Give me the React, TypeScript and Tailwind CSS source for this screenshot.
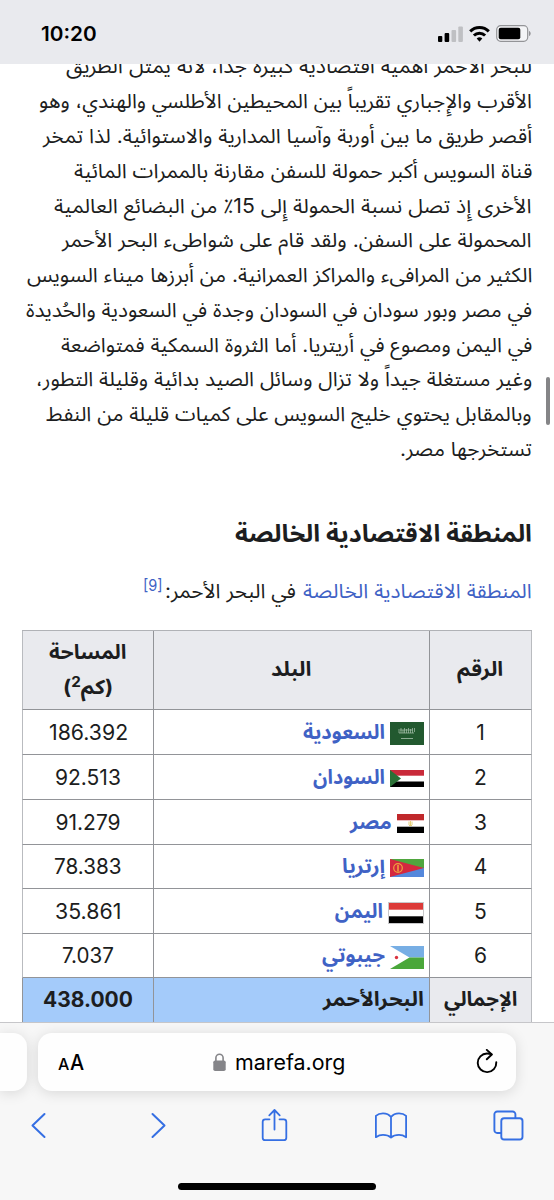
import React, { useLayoutEffect, useRef, useState } from 'react';

interface FitTextProps {
    width: number;
    className?: string;
    dir?: 'rtl' | 'ltr';
    children: React.ReactNode;
}

// Squeezes or stretches one line of text to the given width
const FitText: React.FC<FitTextProps> = ({ width, className = '', dir = 'rtl', children }) => {
    const ref = useRef<HTMLSpanElement>(null);
    const [scale, setScale] = useState(1);

    useLayoutEffect(() => {
        if (ref.current && ref.current.offsetWidth > 0) {
            setScale(width / ref.current.offsetWidth);
        }
    }, [width]);

    return (
        <span dir={dir} className={`inline-flex whitespace-nowrap ${className}`} style={{ width }}>
            <span
                ref={ref}
                className={`inline-block shrink-0 ${dir === 'rtl' ? 'origin-right' : 'origin-left'}`}
                style={{ transform: `scaleX(${scale})` }}
            >
                {children}
            </span>
        </span>
    );
};

const LINES = [
    { text: 'للبحر الأحمر أهمية اقتصادية كبيرة جداً، لأنه يمثل الطريق', width: 466 },
    { text: 'الأقرب والإِجباري تقريباً بين المحيطين الأطلسي والهندي، وهو', width: 493 },
    { text: 'أقصر طريق ما بين أوربة وآسيا المدارية والاستوائية. لذا تمخر', width: 489 },
    { text: 'قناة السويس أكبر حمولة للسفن مقارنة بالممرات المائية', width: 459 },
    { text: 'الأخرى إِذ تصل نسبة الحمولة إِلى 15٪ من البضائع العالمية', width: 478 },
    { text: 'المحمولة على السفن. ولقد قام على شواطىء البحر الأحمر', width: 470 },
    { text: 'الكثير من المرافىء والمراكز العمرانية. من أبرزها ميناء السويس', width: 505 },
    { text: 'في مصر وبور سودان في السودان وجدة في السعودية والحُديدة', width: 506 },
    { text: 'في اليمن ومصوع في أريتريا. أما الثروة السمكية فمتواضعة', width: 471 },
    { text: 'وغير مستغلة جيداً ولا تزال وسائل الصيد بدائية وقليلة التطور،', width: 496 },
    { text: 'وبالمقابل يحتوي خليج السويس على كميات قليلة من النفط', width: 486 },
    { text: 'تستخرجها مصر.', width: 132 },
];

const SaudiFlag = () => (
    <svg width="34" height="23" viewBox="0 0 34 23">
        <rect width="34" height="23" fill="#22592f" />
        <path d="M9 7v4M11 6v5M13 8v3M14.500 6v5M16.500 7v4M18.500 6v5M20.500 7v4M22.500 6v5M24.500 6v4M9 11h15M10 8h13" stroke="#a9c2ae" strokeWidth=".7" fill="none" />
        <path d="M11 16.500h12" stroke="#a9c2ae" strokeWidth=".8" />
    </svg>
);

const SudanFlag = () => (
    <svg width="34" height="17" viewBox="0 0 34 17">
        <rect width="34" height="17" fill="#fff" />
        <rect width="34" height="5.700" fill="#c92a3a" />
        <rect y="11.500" width="34" height="5.500" fill="#000" />
        <path d="M0 0l11 8.500L0 17z" fill="#2b7036" />
    </svg>
);

const EgyptFlag = () => (
    <svg width="27" height="19" viewBox="0 0 27 19">
        <rect width="27" height="19" fill="#fff" />
        <rect width="27" height="6.300" fill="#c0282b" />
        <rect y="12.700" width="27" height="6.300" fill="#000" />
        <path d="M12 7.500v3.500M15 7.500v3.500M13.500 7v5M12 11.500h3" stroke="#e6cf78" strokeWidth="1" />
    </svg>
);

const EritreaFlag = () => (
    <svg width="34" height="18" viewBox="0 0 34 18">
        <rect width="34" height="9" fill="#4fa63e" />
        <rect y="9" width="34" height="9" fill="#5488dc" />
        <path d="M0 0l34 9L0 18z" fill="#d4283f" />
        <circle cx="8" cy="9" r="4.300" fill="none" stroke="#efa13f" strokeWidth="1.200" />
        <path d="M8 6v6.500" stroke="#efa13f" strokeWidth="1.600" />
    </svg>
);

const YemenFlag = () => (
    <svg width="36" height="22" viewBox="0 0 36 22">
        <rect width="36" height="22" fill="#c8c8ca" />
        <rect x="1" y="1" width="34" height="20" fill="#fff" />
        <rect x="1" y="1" width="34" height="6.700" fill="#dc3a38" />
        <rect x="1" y="14.300" width="34" height="6.700" fill="#000" />
    </svg>
);

const DjiboutiFlag = () => (
    <svg width="34" height="23" viewBox="0 0 34 23">
        <rect width="34" height="11.500" fill="#77aee4" />
        <rect y="11.500" width="34" height="11.500" fill="#4aa73a" />
        <path d="M0 0l19.500 11.500L0 23z" fill="#fff" />
        <circle cx="6.500" cy="11.500" r="1.700" fill="#d93340" />
    </svg>
);

const ROWS = [
    { name: 'السعودية', nameWidth: 82, area: '186.392', areaWidth: 79, Flag: SaudiFlag },
    { name: 'السودان', nameWidth: 72, area: '92.513', areaWidth: 66, Flag: SudanFlag },
    { name: 'مصر', nameWidth: 42, area: '91.279', areaWidth: 65, Flag: EgyptFlag },
    { name: 'إرتريا', nameWidth: 43, area: '78.383', areaWidth: 68, Flag: EritreaFlag },
    { name: 'اليمن', nameWidth: 48, area: '35.861', areaWidth: 66, Flag: YemenFlag },
    { name: 'جيبوتي', nameWidth: 63, area: '7.037', areaWidth: 52, Flag: DjiboutiFlag },
];

const CELL = 'flex items-center justify-center border-b border-l border-b-[#929498] border-l-[#929498]';
const FIRST = 'border-r border-r-[#b9bbbf]';

const StatusBar = () => (
    <header dir="ltr" className="relative z-10 flex h-16 shrink-0 items-start justify-between bg-[#e9eaee] pl-[41px] pr-[23px]">
        <div className="pt-[21px] text-[20px] font-semibold leading-[26px] text-black">
            <FitText width={56} dir="ltr">10:20</FitText>
        </div>
        <div className="flex items-center gap-1.5 pt-[25px]">
            <svg width="25" height="16" viewBox="0 0 25 16">
                <rect y="10" width="4.300" height="6" rx="1" fill="#000" />
                <rect x="6.600" y="7" width="4.600" height="9" rx="1" fill="#000" />
                <rect x="13.500" y="4" width="4.600" height="12" rx="1" fill="#bfc0c3" />
                <rect x="20.300" y="0.500" width="4.600" height="15.500" rx="1" fill="#bfc0c3" />
            </svg>
            <svg width="21" height="16" viewBox="0 0 21 16" fill="none" stroke="#000" strokeWidth="3">
                <path d="M1.200 5.400a13.200 13.200 0 0 1 18.600 0" />
                <path d="M4.900 9.500a7.900 7.900 0 0 1 11.200 0" />
                <path d="M10.500 15.800l-2.800-3.200a4 4 0 0 1 5.600 0z" fill="#000" stroke="none" />
            </svg>
            <svg width="35" height="17" viewBox="0 0 35 17">
                <rect x="0.700" y="0.700" width="31" height="15.600" rx="4" fill="#f4f5f7" stroke="#939497" strokeWidth="1.200" />
                <rect x="2.700" y="2.700" width="21.600" height="11.600" rx="2" fill="#000" />
                <path d="M33 6v5c1-.3 1.700-1.300 1.700-2.500S34 6.300 33 6z" fill="#939497" />
            </svg>
        </div>
    </header>
);

const EconomicZoneTable = () => (
    <div className="mr-[22px] grid w-[510px] grid-cols-[103px_276px_131px] grid-rows-[79px_45px_45px_45px_44px_45px_44px_45px] border-t border-[#b0b2b6] text-[20px] leading-[35px]">
        <div className={`${CELL} ${FIRST} bg-[#e9eaee] font-bold`}>
            <FitText width={46}>الرقم</FitText>
        </div>
        <div className={`${CELL} bg-[#e9eaee] font-bold`}>
            <FitText width={40}>البلد</FitText>
        </div>
        <div className={`${CELL} flex-col border-l-[#b9bbbf] bg-[#e9eaee] font-bold`}>
            <FitText width={77}>المساحة</FitText>
            <FitText width={50}>(كم<sup className="text-[14px]">2</sup>)</FitText>
        </div>
        {ROWS.map(({ name, nameWidth, area, areaWidth, Flag }, i) => (
            <React.Fragment key={name}>
                <div className={`${CELL} ${FIRST} pt-px text-[21px]`}>{i + 1}</div>
                <div className={`${CELL} !justify-start gap-[5px] pr-[5px] pt-px`}>
                    <span className="pt-[3px]">
                        <Flag />
                    </span>
                    <a className="font-bold text-[#3f62c5]">
                        <FitText width={nameWidth}>{name}</FitText>
                    </a>
                </div>
                <div className={`${CELL} border-l-[#b9bbbf] pt-px text-[21px]`}>
                    <FitText width={areaWidth} dir="ltr">{area}</FitText>
                </div>
            </React.Fragment>
        ))}
        <div className={`${CELL} ${FIRST} bg-[#e9eaee] font-bold`}>
            <FitText width={73}>الإجمالي</FitText>
        </div>
        <div className={`${CELL} !justify-start bg-[#a4cbfa] pr-[5px] font-bold`}>
            <FitText width={101}>البحرالأحمر</FitText>
        </div>
        <div className={`${CELL} bg-[#a4cbfa] text-[21px] font-bold`}>
            <FitText width={90} dir="ltr">438.000</FitText>
        </div>
    </div>
);

const BrowserBar = () => (
    <footer dir="ltr" className="relative z-10 flex h-[178px] shrink-0 flex-col border-t border-[#c6c6c9] bg-[#f7f7f7]">
        <div className="flex h-[83px] items-start gap-[11px] overflow-hidden pt-[10px]">
            <div className="h-[58px] w-[27px] rounded-r-[14px] bg-[#fefefe] shadow-[0_2px_14px_rgba(0,0,0,0.13)]" />
            <div className="flex h-[58px] w-[478px] items-center rounded-[14px] bg-[#fefefe] pl-[20px] pr-[17px] shadow-[0_2px_14px_rgba(0,0,0,0.13)]">
                <div className="flex items-baseline gap-px pt-px font-medium text-black">
                    <FitText width={11} dir="ltr" className="text-[16px]">A</FitText>
                    <FitText width={14.500} dir="ltr" className="text-[22px]">A</FitText>
                </div>
                <div className="ml-[128px] flex items-center gap-[9px]">
                    <svg width="13" height="18" viewBox="0 0 13 18">
                        <path d="M2.900 8V4.800a3.600 3.600 0 0 1 7.200 0V8" fill="none" stroke="#858589" strokeWidth="1.600" />
                        <rect x="0.300" y="7.500" width="12.400" height="10.500" rx="1.800" fill="#858589" />
                    </svg>
                    <FitText width={110} dir="ltr" className="pt-px text-[21px] text-black">marefa.org</FitText>
                </div>
                <svg width="24" height="26" viewBox="0 0 24 26" fill="none" stroke="#000" strokeWidth="1.900" strokeLinecap="round" strokeLinejoin="round" className="ml-auto">
                    <path d="M21.300 13.300A9.300 9.300 0 1 1 12 4.500q2.500 0 4.500.8" />
                    <path d="M11.800 0.900l5 4.600-5 4.800" />
                </svg>
            </div>
        </div>
        <nav className="flex h-[38px] items-center pl-[31px] text-[#356fe3]">
            <svg width="15" height="34" viewBox="0 0 15 34" fill="none" stroke="currentColor" strokeWidth="2" strokeLinecap="round" strokeLinejoin="round">
                <path d="M13.500 6L1.500 17.500l12 11.500" />
            </svg>
            <svg width="15" height="34" viewBox="0 0 15 34" fill="none" stroke="currentColor" strokeWidth="2" strokeLinecap="round" strokeLinejoin="round" className="ml-[105px]">
                <path d="M1.500 6l12 11.500-12 11.500" />
            </svg>
            <svg width="27" height="34" viewBox="0 0 27 34" fill="none" stroke="currentColor" strokeWidth="1.800" strokeLinecap="round" strokeLinejoin="round" className="ml-[95px]">
                <path d="M8.500 11.300H4.200a2.500 2.500 0 0 0-2.500 2.500v15.900a2.500 2.500 0 0 0 2.500 2.500h18.600a2.500 2.500 0 0 0 2.500-2.500V13.800a2.500 2.500 0 0 0-2.500-2.500h-4.300" />
                <path d="M13.500 21.500V2.500M8.300 7.300l5.200-5.300 5.200 5.300" />
            </svg>
            <svg width="34" height="34" viewBox="0 0 34 34" fill="none" stroke="currentColor" strokeWidth="1.800" strokeLinejoin="round" className="ml-[86px]">
                <path d="M17 9C15 6.300 12 5.300 9 5.300S3.500 6.300 1.900 7.800v21.400C4 27.700 6.500 26.900 9 26.900s6 .9 8 2.600c2-1.700 5-2.600 8-2.600s5 .8 7.100 2.300V7.800C30.500 6.300 28 5.300 25 5.300s-6 1-8 3.700zM17 9v20.300" />
            </svg>
            <svg width="31" height="34" viewBox="0 0 31 34" fill="none" stroke="currentColor" strokeWidth="1.900" strokeLinejoin="round" className="ml-[85px]">
                <path d="M8.300 25H4.200a2.800 2.800 0 0 1-2.800-2.800V6.300A2.800 2.800 0 0 1 4.200 3.500h15.400a2.800 2.800 0 0 1 2.800 2.800v4" />
                <rect x="8.300" y="10.300" width="21.200" height="21.200" rx="2.800" />
            </svg>
        </nav>
        <div className="mx-auto mt-[39px] h-[7px] w-[198px] rounded-full bg-black" />
    </footer>
);

const App: React.FC = () => {
    return (
        <div dir="rtl" className="relative flex h-[1200px] w-[554px] flex-col overflow-hidden bg-white font-['Inter','Noto_Sans_Arabic','DejaVu_Sans',sans-serif] text-[#1c1d20]">
            <StatusBar />
            <main className="min-h-0 flex-1 overflow-hidden">
                <div className="-mt-[14.700px] pr-[22px] text-[20px]">
                    {LINES.map((line) => (
                        <div key={line.text} className="flex h-[34.8px] items-center leading-[34.8px]">
                            <FitText width={line.width}>{line.text}</FitText>
                        </div>
                    ))}
                    <h3 className="mt-[46.700px] flex h-[40px] items-center text-[24px] font-bold leading-[40px]">
                        <FitText width={297}>المنطقة الاقتصادية الخالصة</FitText>
                    </h3>
                    <p className="mt-[19px] flex h-[36px] items-center leading-[36px]">
                        <FitText width={229} className="text-[#3f62c5]">المنطقة الاقتصادية الخالصة</FitText>
                        <FitText width={131} className="mr-[7px]">في البحر الأحمر:</FitText>
                        <FitText width={20} dir="ltr" className="mr-[2px] -mt-[12px] text-[16px] text-[#3f62c5]">[9]</FitText>
                    </p>
                </div>
                <div className="mt-[21.400px]">
                    <EconomicZoneTable />
                </div>
            </main>
            <BrowserBar />
            <div className="absolute left-[546px] top-[377px] z-20 h-[48px] w-[4px] rounded-full bg-[#858587]" />
        </div>
    );
};

export default App;
